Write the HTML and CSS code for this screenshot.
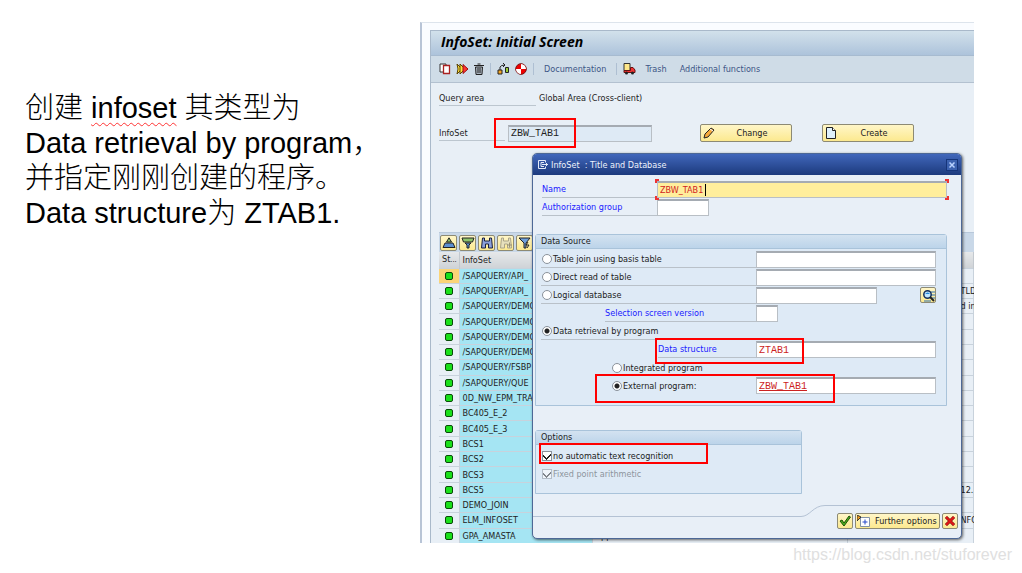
FILE: index.html
```html
<!DOCTYPE html>
<html lang="zh-CN">
<head>
    <meta charset="UTF-8">
    <meta name="viewport" content="width=device-width, initial-scale=1.0">
    <title>InfoSet: Initial Screen</title>
    <link rel="stylesheet" href="styles.css">
</head>
<body>
    <main class="slide">
        <div class="note">
            <p>创建 <span class="misspelled">infoset</span> 其类型为</p>
            <p>Data retrieval by program，</p>
            <p>并指定刚刚创建的程序。</p>
            <p>Data structure为 ZTAB1.</p>
        </div>

        <section class="sap">
            <div class="window">
                <h1 class="title-bar">InfoSet: Initial Screen</h1>
                <div class="toolbar">
                    <button class="tool" aria-label="Copy">
                        <svg width="12" height="12" viewBox="0 0 12 12"><path d="M1 1h6v8H1z" fill="#fff" stroke="#333"/><path d="M4.500 2.500h6v8h-6z" fill="#fff" stroke="#a22" stroke-width="1.300"/></svg>
                    </button>
                    <button class="tool" aria-label="Rename">
                        <svg width="13" height="12" viewBox="0 0 13 12"><path d="M1 1l5 5-5 5 1-5z" fill="#ffe23c" stroke="#5a4200"/><path d="M4 1l5 5-5 5z" fill="#ffe23c" stroke="#5a4200"/><path d="M7 1.500l5 4.500-5 4.500z" fill="#f33" stroke="#911"/></svg>
                    </button>
                    <button class="tool" aria-label="Delete">
                        <svg width="10" height="12" viewBox="0 0 10 12"><path d="M1.500 4h7l-.5 7.500H2z" fill="#aab4be" stroke="#222"/><path d="M0 2.500h10M3.500 1h3M4 5v5M6 5v5" stroke="#222" fill="none"/></svg>
                    </button>
                    <i class="sep"></i>
                    <button class="tool" aria-label="Where used">
                        <svg width="13" height="12" viewBox="0 0 13 12"><path d="M3 7V4q1-2 5-2M6 0l2 2-2 2" fill="none" stroke="#222"/><path d="M1 7h4v4H1z" fill="#f5a623" stroke="#222"/><path d="M8.500 4.500h3v5h-3z" fill="#9c3" stroke="#222"/></svg>
                    </button>
                    <button class="tool" aria-label="Query">
                        <svg width="12" height="12" viewBox="0 0 12 12"><circle cx="6" cy="6" r="5.300" fill="#e00" stroke="#711"/><path d="M6 6V.9A5 5 0 0 1 11 6zM6 6v5.100A5 5 0 0 1 1 6z" fill="#fff"/></svg>
                    </button>
                    <i class="sep"></i>
                    <button class="tool text">Documentation</button>
                    <i class="sep"></i>
                    <button class="tool" aria-label="Transport">
                        <svg width="13" height="12" viewBox="0 0 13 12"><path d="M1 .5h6v7H1z" fill="#ffe88a" stroke="#333"/><path d="M7.500 4.500H10l2 2.500v2.500H1V7.500h6.500z" fill="#e33" stroke="#611"/><circle cx="3.500" cy="10" r="1.500" fill="#222"/><circle cx="9.500" cy="10" r="1.500" fill="#222"/></svg>
                    </button>
                    <button class="tool text">Trash</button>
                    <button class="tool text">Additional functions</button>
                </div>

                <form class="query">
                    <div class="query-row">
                        <span class="query-label">Query area</span>
                        <span>Global Area (Cross-client)</span>
                    </div>
                    <div class="query-row infoset-row">
                        <label class="query-label" for="infoset">InfoSet</label>
                        <input class="field mono infoset-field" id="infoset" value="ZBW_TAB1" readonly>
                        <button type="button" class="btn wide">
                            <svg width="12" height="12" viewBox="0 0 12 12"><path d="M1 11l1-4 6-6 3 2-6 7z" fill="#f6a93b" stroke="#222"/><path d="M7 2l3 2" stroke="#fff"/></svg>
                            <span>Change</span>
                        </button>
                        <button type="button" class="btn wide">
                            <svg width="12" height="12" viewBox="0 0 12 12"><path d="M1.500.5h6l3 3v8h-9z" fill="#dff0fb" stroke="#222"/><path d="M7.500.5v3h3" fill="#fff" stroke="#222"/></svg>
                            <span>Create</span>
                        </button>
                        <i class="mark mark-infoset"></i>
                    </div>
                </form>

                <div class="list">
                    <div class="list-tools">
                        <button class="btn icon" aria-label="Sort ascending"><svg width="14" height="12" viewBox="0 0 14 12"><path d="M7 .8l2.500 4.200h-5z" fill="#8fc36b" stroke="#222"/><path d="M3 6h8l2 4.500H1z" fill="#5b8fd0" stroke="#222"/></svg></button>
                        <button class="btn icon" aria-label="Sort descending"><svg width="14" height="12" viewBox="0 0 14 12"><path d="M1 1h12l-1.500 4h-9z" fill="#8fc36b" stroke="#222"/><path d="M4 6h6L8 8v3H6V8z" fill="#5b8fd0" stroke="#222"/></svg></button>
                        <button class="btn icon" aria-label="Find"><svg width="14" height="12" viewBox="0 0 14 12"><path d="M2.500 1h2v3h5V1h2l1 10h-4V7h-3v4h-4z" fill="#8ba0dc" stroke="#1a2040"/></svg></button>
                        <button class="btn icon" aria-label="Find next" disabled><svg width="14" height="12" viewBox="0 0 14 12"><path d="M2.500 1h2v3h5V1h2l1 10h-4V7h-3v4h-4z" fill="#e6e0bd" stroke="#aaa48a"/><path d="M8 8h5M10.500 5.500v5" stroke="#999172"/></svg></button>
                        <button class="btn icon" aria-label="Filter"><svg width="14" height="12" viewBox="0 0 14 12"><path d="M1 1h11L8 6v5H6V6z" fill="#6fa0dc" stroke="#222"/><path d="M10 5l-2 3h3l-2 3" fill="none" stroke="#222"/></svg></button>
                    </div>
                    <table class="grid">
                        <thead>
                            <tr><th class="c-st">St<small>...</small></th><th class="c-name">InfoSet</th><th class="c-text"></th><th></th></tr>
                        </thead>
                        <tbody>
                            <tr class="current"><td><i class="led"></i></td><td>/SAPQUERY/API_</td><td></td><td></td></tr>
                            <tr><td><i class="led"></i></td><td>/SAPQUERY/API_</td><td></td><td class="tail">TLD</td></tr>
                            <tr><td><i class="led"></i></td><td>/SAPQUERY/DEMO</td><td></td><td class="tail">d in</td></tr>
                            <tr><td><i class="led"></i></td><td>/SAPQUERY/DEMO</td><td></td><td></td></tr>
                            <tr><td><i class="led"></i></td><td>/SAPQUERY/DEMO</td><td></td><td></td></tr>
                            <tr><td><i class="led"></i></td><td>/SAPQUERY/DEMO</td><td></td><td></td></tr>
                            <tr><td><i class="led"></i></td><td>/SAPQUERY/FSBP</td><td></td><td></td></tr>
                            <tr><td><i class="led"></i></td><td>/SAPQUERY/QUE</td><td></td><td></td></tr>
                            <tr><td><i class="led"></i></td><td>0D_NW_EPM_TRA</td><td></td><td></td></tr>
                            <tr><td><i class="led"></i></td><td>BC405_E_2</td><td></td><td></td></tr>
                            <tr><td><i class="led"></i></td><td>BC405_E_3</td><td></td><td></td></tr>
                            <tr><td><i class="led"></i></td><td>BCS1</td><td></td><td></td></tr>
                            <tr><td><i class="led"></i></td><td>BCS2</td><td></td><td></td></tr>
                            <tr><td><i class="led"></i></td><td>BCS3</td><td></td><td></td></tr>
                            <tr><td><i class="led"></i></td><td>BCS5</td><td></td><td class="tail">12.</td></tr>
                            <tr><td><i class="led"></i></td><td>DEMO_JOIN</td><td></td><td></td></tr>
                            <tr><td><i class="led"></i></td><td>ELM_INFOSET</td><td></td><td class="tail">NFO</td></tr>
                            <tr><td><i class="led"></i></td><td>GPA_AMASTA</td><td>Application Statistical Data</td><td>Table AMASTA</td></tr>
                        </tbody>
                    </table>
                </div>
            </div>

            <form class="dialog" role="dialog" aria-labelledby="dialog-title">
                <header class="dialog-head">
                    <svg width="12" height="11" viewBox="0 0 12 11"><path d="M8.500 3V1.500h-7v8h7V8M7 3.500H4v4h3M5 5.500h6M8.500 3.500l2 2-2 2" fill="none" stroke="#e4ebf8"/></svg>
                    <h2 id="dialog-title">InfoSet&nbsp; : Title and Database</h2>
                    <button type="button" class="close" aria-label="Close"><svg width="8" height="8" viewBox="0 0 8 8"><path d="M1.500 1.500l5 5M6.500 1.500l-5 5" stroke="#b9d2ff" stroke-width="1.500"/></svg></button>
                </header>

                <div class="names">
                    <label class="line blue" for="name">Name</label>
                    <div class="focus-box"><input class="field name-field" id="name" value="ZBW_TAB1"><i class="caret"></i></div>
                    <label class="line blue" for="group">Authorization group</label>
                    <input class="field group-field" id="group">
                </div>

                <fieldset class="box source">
                    <legend>Data Source</legend>
                    <div class="row">
                        <label class="line"><input type="radio" name="src">Table join using basis table</label>
                        <input class="field" aria-label="Basis table">
                    </div>
                    <div class="row">
                        <label class="line"><input type="radio" name="src">Direct read of table</label>
                        <input class="field" aria-label="Table">
                    </div>
                    <div class="row">
                        <label class="line"><input type="radio" name="src">Logical database</label>
                        <input class="field medium" aria-label="Logical database">
                        <button type="button" class="btn icon search" aria-label="Search"><svg width="13" height="13" viewBox="0 0 13 13"><path d="M9 3h4M9 6h4M9 9h4M2 12h7" stroke="#2a6fb5"/><circle cx="5.500" cy="5.500" r="3.700" fill="#bfe6ff" stroke="#14305c" stroke-width="1.500"/><path d="M3 5q3-3 5 0z" fill="#2286d8"/><path d="M8 8l4 4" stroke="#222" stroke-width="2"/></svg></button>
                    </div>
                    <div class="row">
                        <label class="line blue in-1" for="version">Selection screen version</label>
                        <input class="field tiny" id="version">
                    </div>
                    <div class="row">
                        <label class="line"><input type="radio" name="src" checked>Data retrieval by program</label>
                    </div>
                    <div class="row">
                        <label class="line blue in-2" for="structure">Data structure</label>
                        <input class="field mono red" id="structure" value="ZTAB1">
                        <i class="mark mark-structure"></i>
                    </div>
                    <div class="row">
                        <label class="plain in-3"><input type="radio" name="prog">Integrated program</label>
                    </div>
                    <div class="row">
                        <label class="plain in-3"><input type="radio" name="prog" checked>External program:</label>
                        <input class="field mono red underlined" aria-label="External program" value="ZBW_TAB1">
                        <i class="mark mark-program"></i>
                    </div>
                </fieldset>

                <fieldset class="box options">
                    <legend>Options</legend>
                    <div class="row">
                        <label class="plain"><input type="checkbox" checked>no automatic text recognition</label>
                        <i class="mark mark-option"></i>
                    </div>
                    <div class="row">
                        <label class="plain off"><input type="checkbox" checked disabled>Fixed point arithmetic</label>
                    </div>
                </fieldset>

                <footer class="dialog-foot">
                    <div class="edge-low"></div>
                    <svg class="edge-curve" width="24" height="12" viewBox="0 0 24 12"><path d="M0 11.500C9 11.500 12 .5 24 .5" fill="none" stroke="#b4c2d4"/></svg>
                    <div class="actions">
                        <button type="button" class="btn icon" aria-label="Continue"><svg width="12" height="12" viewBox="0 0 12 12"><path d="M1 6l2-1 2 3 5-7 1.500 1L5 11z" fill="#4bb01c" stroke="#1d5208"/></svg></button>
                        <button type="button" class="btn further"><svg width="14" height="12" viewBox="0 0 14 12"><path d="M3.500 2.500h9v9h-9z" fill="#fff" stroke="#8292a8"/><path d="M8 4.500v5M5.500 7h5" stroke="#2546c8"/><path d="M0 0l4 2-4 4z" fill="#f09a1a" stroke="#333"/></svg><span>Further options</span></button>
                        <button type="button" class="btn icon" aria-label="Cancel"><svg width="12" height="12" viewBox="0 0 12 12"><path d="M2 2l8 8M10 2l-8 8" stroke="#600" stroke-width="3"/><path d="M2 2l8 8M10 2l-8 8" stroke="#e21818" stroke-width="2"/></svg></button>
                    </div>
                </footer>
            </form>
        </section>
    </main>
    <a class="watermark" href="https://blog.csdn.net/stuforever">https://blog.csdn.net/stuforever</a>
</body>
</html>
```
FILE: styles.css
```css
* {
    box-sizing: border-box;
}

body {
    margin: 0;
    background: #fff;
    color: #222;
    font-family: "DejaVu Sans Condensed", "DejaVu Sans", sans-serif;
    font-size: 9px;
    line-height: 12px;
}

h1, h2, p, fieldset {
    margin: 0;
}

button, input {
    font: inherit;
    color: inherit;
}

svg {
    display: block;
    flex: none;
}

.slide {
    display: grid;
    grid-template-columns: 420px 1fr;
    padding: 22px 48px 0 0;
}

/* text on the left */
.note {
    padding: 69px 0 0 25px;
    color: #000;
    font-family: "Liberation Sans", "Noto Sans CJK SC", sans-serif;
    font-size: 29px;
    font-weight: 300;
    line-height: 35px;
    white-space: nowrap;
}

.misspelled {
    text-decoration: underline wavy #f33 1px;
    text-underline-offset: 4px;
}

/* SAP screen */
.sap {
    position: relative;
    overflow: hidden;
    padding: 7px 0 0 8px;
    border-left: 2px solid #b8c4d6;
    border-top: 1px solid #dde4ec;
    background: #fafcff;
}

.window {
    border-top: 1px solid #a9b9ca;
    border-left: 1px solid #a9b9ca;
    background: #e8eff6;
}

.title-bar {
    height: 25px;
    padding-left: 10px;
    background: linear-gradient(#d2e1eb, #adc3db);
    border-bottom: 1px solid #a7bbd0;
    color: #000;
    font-family: "Open Sans", sans-serif;
    font-size: 14px;
    font-style: italic;
    font-weight: 700;
    line-height: 22px;
}

.toolbar {
    display: flex;
    align-items: center;
    gap: 5px;
    height: 27px;
    padding-left: 8px;
    background: #cfdce7;
    border-bottom: 1px solid #b3c1d0;
}

.tool {
    padding: 0;
    border: 0;
    background: none;
    color: #3d5686;
}

.tool.text {
    margin: 0 4px;
}

.sep {
    width: 1px;
    height: 12px;
    margin: 0 1px;
    background: #aebfd2;
}

.query {
    padding: 6px 0 0 8px;
}

.query-row {
    position: relative;
    display: flex;
    align-items: center;
    height: 18px;
}

.query-label {
    width: 97px;
    height: 16px;
    margin-right: 3px;
    border-bottom: 1px solid #bcc6cf;
    line-height: 16px;
}

.infoset-row {
    margin-top: 17px;
}

.infoset-row .query-label {
    width: 66px;
}

.field {
    width: 100%;
    height: 17px;
    padding: 0 2px;
    border: 1px solid #b9bfc5;
    border-top: 2px solid #a5abb2;
    background: #fff;
    outline: none;
}

.mono {
    font-family: "Liberation Mono", monospace;
    font-size: 10px;
}

.infoset-field {
    width: 144px;
    margin-right: 48px;
    background: #deeaf5;
}

.btn {
    display: flex;
    align-items: center;
    padding: 0 2px;
    border: 1px solid #8d8a74;
    border-radius: 2px;
    background: linear-gradient(#fff6c8, #fce98f);
    color: #222;
}

.btn.wide {
    width: 92px;
    height: 18px;
    margin-right: 30px;
}

.btn.wide span {
    flex: 1;
}

.btn.icon {
    justify-content: center;
    width: 16px;
    height: 16px;
    padding: 0;
}

/* red frames round the values to enter */
.mark {
    position: absolute;
    border: 2px solid #f00;
    pointer-events: none;
}

.mark-infoset {
    top: -6px;
    left: 55px;
    width: 82px;
    height: 30px;
}

.mark-structure {
    top: -3px;
    left: 114px;
    width: 149px;
    height: 26px;
}

.mark-program {
    top: -3px;
    left: 54px;
    width: 240px;
    height: 29px;
}

.mark-option {
    top: -4px;
    left: -2px;
    width: 169px;
    height: 21px;
}

/* InfoSet list */
.list {
    margin: 90px 0 -1px 8px;
}

.list-tools {
    display: flex;
    gap: 2px;
    height: 20px;
    padding: 2px 1px;
    border-top: 1px solid #b8c8da;
    background: #c9d8e8;
}

.list-tools .btn {
    width: 17px;
}

.grid {
    width: 100%;
    height: 292px;
    border-collapse: collapse;
    table-layout: fixed;
    white-space: nowrap;
}

.grid th {
    height: 16px;
    padding: 0 3px;
    border-right: 1px solid #c3c9cf;
    background: linear-gradient(#e6e8ea, #cfd3d7);
    font-weight: 400;
    text-align: left;
}

.grid td {
    padding: 0 3px;
    border: 1px solid #c8d2dc;
    border-left: 0;
    line-height: 12px;
}

.grid td:nth-child(2) {
    background: #a5e5f3;
}

.grid .current td:first-child {
    background: #fbd477;
}

.grid .tail {
    padding: 0 0 0 113px;
}

.c-st {
    width: 20px;
}

.c-name {
    width: 133px;
}

.c-text {
    width: 255px;
}

.led {
    display: block;
    width: 8px;
    height: 8px;
    margin: 0 auto;
    border: 1px solid #0a4a0a;
    border-radius: 2px;
    background: #1be01b;
}

/* dialog over the list */
.dialog {
    position: absolute;
    top: 130px;
    left: 110px;
    right: 12px;
    border: 1px solid #4d6896;
    border-radius: 5px;
    background: #e8eff7;
    box-shadow: 1px 1px 3px rgba(0, 0, 0, 0.6);
}

.dialog-head {
    display: flex;
    align-items: center;
    gap: 2px;
    height: 21px;
    padding: 0 3px 0 4px;
    border-radius: 4px 4px 0 0;
    background: linear-gradient(#4167bb, #1c3a7d);
    color: #eef3fc;
}

.dialog-head h2 {
    flex: 1;
    font-size: 9px;
    font-weight: 400;
}

.close {
    display: flex;
    align-items: center;
    justify-content: center;
    width: 12px;
    height: 12px;
    padding: 0;
    border: 1px solid #16357a;
    background: #3c62b0;
}

.names {
    display: grid;
    grid-template-columns: 115px 1fr;
    row-gap: 1px;
    padding: 6px 14px 0 9px;
}

.line {
    height: 17px;
    border-bottom: 1px solid #b9c1c9;
}

.line, .plain {
    display: flex;
    align-items: center;
    white-space: nowrap;
}

.blue {
    color: #1a1aff;
}

.focus-box {
    position: relative;
}

.focus-box::before, .focus-box::after {
    content: "";
    position: absolute;
    top: -2px;
    bottom: -2px;
    width: 4px;
    background: linear-gradient(#e33 4px, transparent 4px calc(100% - 4px), #e33 0);
}

.focus-box::before {
    left: -2px;
}

.focus-box::after {
    right: -2px;
}

.name-field {
    position: relative;
    z-index: 1;
    display: block;
    background: #ffee9c;
    color: #d01c1c;
}

.caret {
    position: absolute;
    z-index: 2;
    top: 3px;
    left: 48px;
    width: 1px;
    height: 12px;
    background: #000;
}

.group-field {
    width: 52px;
}

.box {
    min-width: 0;
    padding: 0 10px 0 5px;
    border: 1px solid #a9c3da;
    border-radius: 3px 3px 0 0;
    background: #deeaf6;
}

.box legend {
    float: left;
    width: calc(100% + 15px);
    height: 14px;
    margin: 0 -10px 2px -5px;
    padding: 0 5px;
    border-bottom: 1px solid #a9c3da;
    background: linear-gradient(#d3e2f0, #bcd4ea);
    line-height: 13px;
}

.source {
    margin: 18px 14px 0 2px;
    padding-bottom: 10px;
}

.row {
    position: relative;
    clear: both;
    display: grid;
    grid-template-columns: 215px 1fr;
    height: 18px;
}

.row:nth-of-type(3) {
    grid-template-columns: 215px 1fr 59px;
}

.row .search {
    justify-self: end;
}

.medium {
    width: 121px;
}

.tiny {
    width: 22px;
}

.in-1 {
    margin-left: 64px;
}

.in-2 {
    margin-left: 117px;
}

.in-3 {
    margin-left: 70px;
}

.red {
    color: #c22;
}

.underlined {
    text-decoration: underline;
}

input[type="radio"], input[type="checkbox"] {
    appearance: none;
    flex: none;
    width: 10px;
    height: 10px;
    margin: 0 1px 0 1px;
    border: 1px solid #8a929b;
    background: #fff;
}

input[type="radio"] {
    border-radius: 50%;
}

input[type="radio"]:checked {
    background: radial-gradient(#222 2px, #fff 3px);
}

input[type="checkbox"]:checked {
    background: linear-gradient(45deg, transparent 30%, #222 30% 45%, transparent 45%) 0 2px / 4px 5px no-repeat, linear-gradient(135deg, transparent 44%, #222 44% 60%, transparent 60%) 3px 1px / 5px 7px no-repeat, #fff;
}

input[type="checkbox"]:disabled {
    opacity: 0.5;
}

.off {
    color: #8d959d;
}

.options {
    width: 267px;
    margin: 24px 0 0 2px;
    padding-bottom: 10px;
}

.dialog-foot {
    display: flex;
    align-items: flex-start;
    height: 33px;
    margin-top: 11px;
}

.edge-low {
    flex: 1;
    height: 12px;
    border-bottom: 1px solid #b4c2d4;
}

.actions {
    display: flex;
    gap: 2px;
    height: 33px;
    padding: 7px 3px 0 12px;
    border-top: 1px solid #b4c2d4;
}

.further {
    gap: 4px;
    width: 85px;
    height: 16px;
    padding: 0 1px;
    white-space: nowrap;
}

.watermark {
    position: absolute;
    right: 10px;
    bottom: 8px;
    color: #e0e0e0;
    font-family: "Liberation Sans", sans-serif;
    font-size: 16px;
    line-height: 20px;
    text-decoration: none;
}
```
